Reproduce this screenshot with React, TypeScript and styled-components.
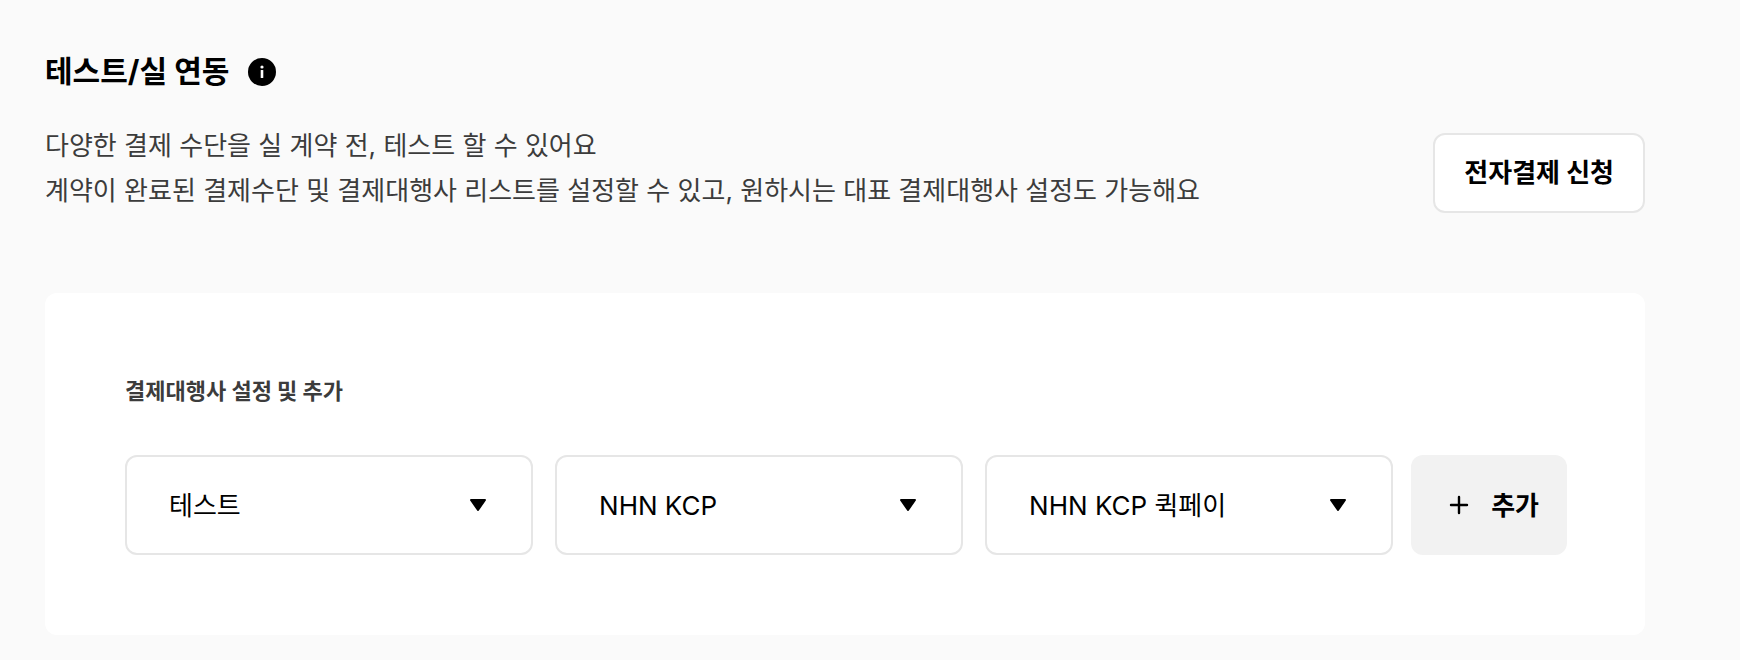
import React from "react";
import styled, { createGlobalStyle } from "styled-components";

const Global = createGlobalStyle`
  *, *::before, *::after { box-sizing: border-box; }
  body { margin: 0; background: #fafafa; color: #000; font-family: Inter, "Noto Sans CJK KR", sans-serif; }
  h1, h2, p { margin: 0; }
  button, select { font-family: inherit; color: inherit; }
`;

const Page = styled.main`
  padding: 48px 95px 24px 45px;
`;

const TitleRow = styled.div`
  display: flex;
  align-items: center;
  gap: 19px;
`;

const Title = styled.h1`
  padding-bottom: 2px;
  font-size: 30px;
  line-height: 46px;
  font-weight: 700;
`;

const InfoButton = styled.button`
  display: flex;
  padding: 0;
  border: 0;
  background: none;
  cursor: pointer;
`;

const Intro = styled.div`
  display: flex;
  justify-content: space-between;
  align-items: flex-end;
  gap: 24px;
  padding-top: 27px;
`;

const Description = styled.p`
  font-size: 26px;
  line-height: 45px;
  color: #3c3c3c;
`;

const ApplyButton = styled.button`
  flex: none;
  height: 80px;
  padding: 0 29px 6px;
  border: 2px solid #e6e6e6;
  border-radius: 12px;
  background: #fff;
  font-size: 26px;
  font-weight: 700;
`;

const Card = styled.section`
  margin-top: 80px;
  padding: 80px 78px 80px 80px;
  border-radius: 12px;
  background: #fff;
`;

const CardTitle = styled.h2`
  font-size: 22px;
  line-height: 36px;
  font-weight: 700;
  color: #3c3c3c;
`;

const Controls = styled.form`
  display: flex;
  gap: 18px;
  padding-top: 46px;
`;

const Selects = styled.div`
  display: grid;
  flex: 1;
  grid-template-columns: repeat(3, 1fr);
  gap: 22px;
`;

const Field = styled.label`
  display: grid;
  align-items: center;
  & > * { grid-area: 1 / 1; }
  svg { justify-self: end; margin-right: 47px; pointer-events: none; }
`;

const Select = styled.select`
  appearance: none;
  width: 100%;
  height: 100px;
  padding: 0 72px 0 42px;
  border: 2px solid #e6e6e6;
  border-radius: 12px;
  background: #fff;
  font-size: 26px;
`;

const AddButton = styled.button`
  display: flex;
  flex: none;
  align-items: center;
  gap: 22px;
  height: 100px;
  padding: 0 28px 0 38px;
  border: 0;
  border-radius: 12px;
  background: #f2f2f2;
  font-size: 26px;
  font-weight: 700;
`;

const AddLabel = styled.span`
  padding-bottom: 4px;
`;

const providers = [
  { label: "연동 환경", value: "테스트" },
  { label: "결제대행사", value: "NHN KCP" },
  { label: "결제 채널", value: "NHN KCP 퀵페이" },
];

export default function App() {
  return (
    <Page>
      <Global />
      <TitleRow>
        <Title>테스트/실 연동</Title>
        <InfoButton type="button" aria-label="도움말">
          <svg width="28" height="28" viewBox="0 0 28 28">
            <circle cx="14" cy="14" r="14" />
            <circle cx="14" cy="9" r="1.6" fill="#fff" />
            <rect x="12.7" y="12" width="2.6" height="8" rx="0.6" fill="#fff" />
          </svg>
        </InfoButton>
      </TitleRow>
      <Intro>
        <Description>
          다양한 결제 수단을 실 계약 전, 테스트 할 수 있어요
          <br />
          계약이 완료된 결제수단 및 결제대행사 리스트를 설정할 수 있고, 원하시는 대표 결제대행사 설정도 가능해요
        </Description>
        <ApplyButton type="button">전자결제 신청</ApplyButton>
      </Intro>
      <Card>
        <CardTitle>결제대행사 설정 및 추가</CardTitle>
        <Controls onSubmit={(e) => e.preventDefault()}>
          <Selects>
            {providers.map((p) => (
              <Field key={p.label}>
                <Select aria-label={p.label} defaultValue={p.value}>
                  <option>{p.value}</option>
                </Select>
                <svg width="16" height="12" viewBox="0 0 16 12">
                  <path d="M1 1h14L8 11z" stroke="#000" strokeWidth="2" strokeLinejoin="round" />
                </svg>
              </Field>
            ))}
          </Selects>
          <AddButton type="submit">
            <svg width="20" height="20" viewBox="0 0 20 20">
              <path d="M10 2v16M2 10h16" stroke="#000" strokeWidth="2.4" strokeLinecap="round" />
            </svg>
            <AddLabel>추가</AddLabel>
          </AddButton>
        </Controls>
      </Card>
    </Page>
  );
}
